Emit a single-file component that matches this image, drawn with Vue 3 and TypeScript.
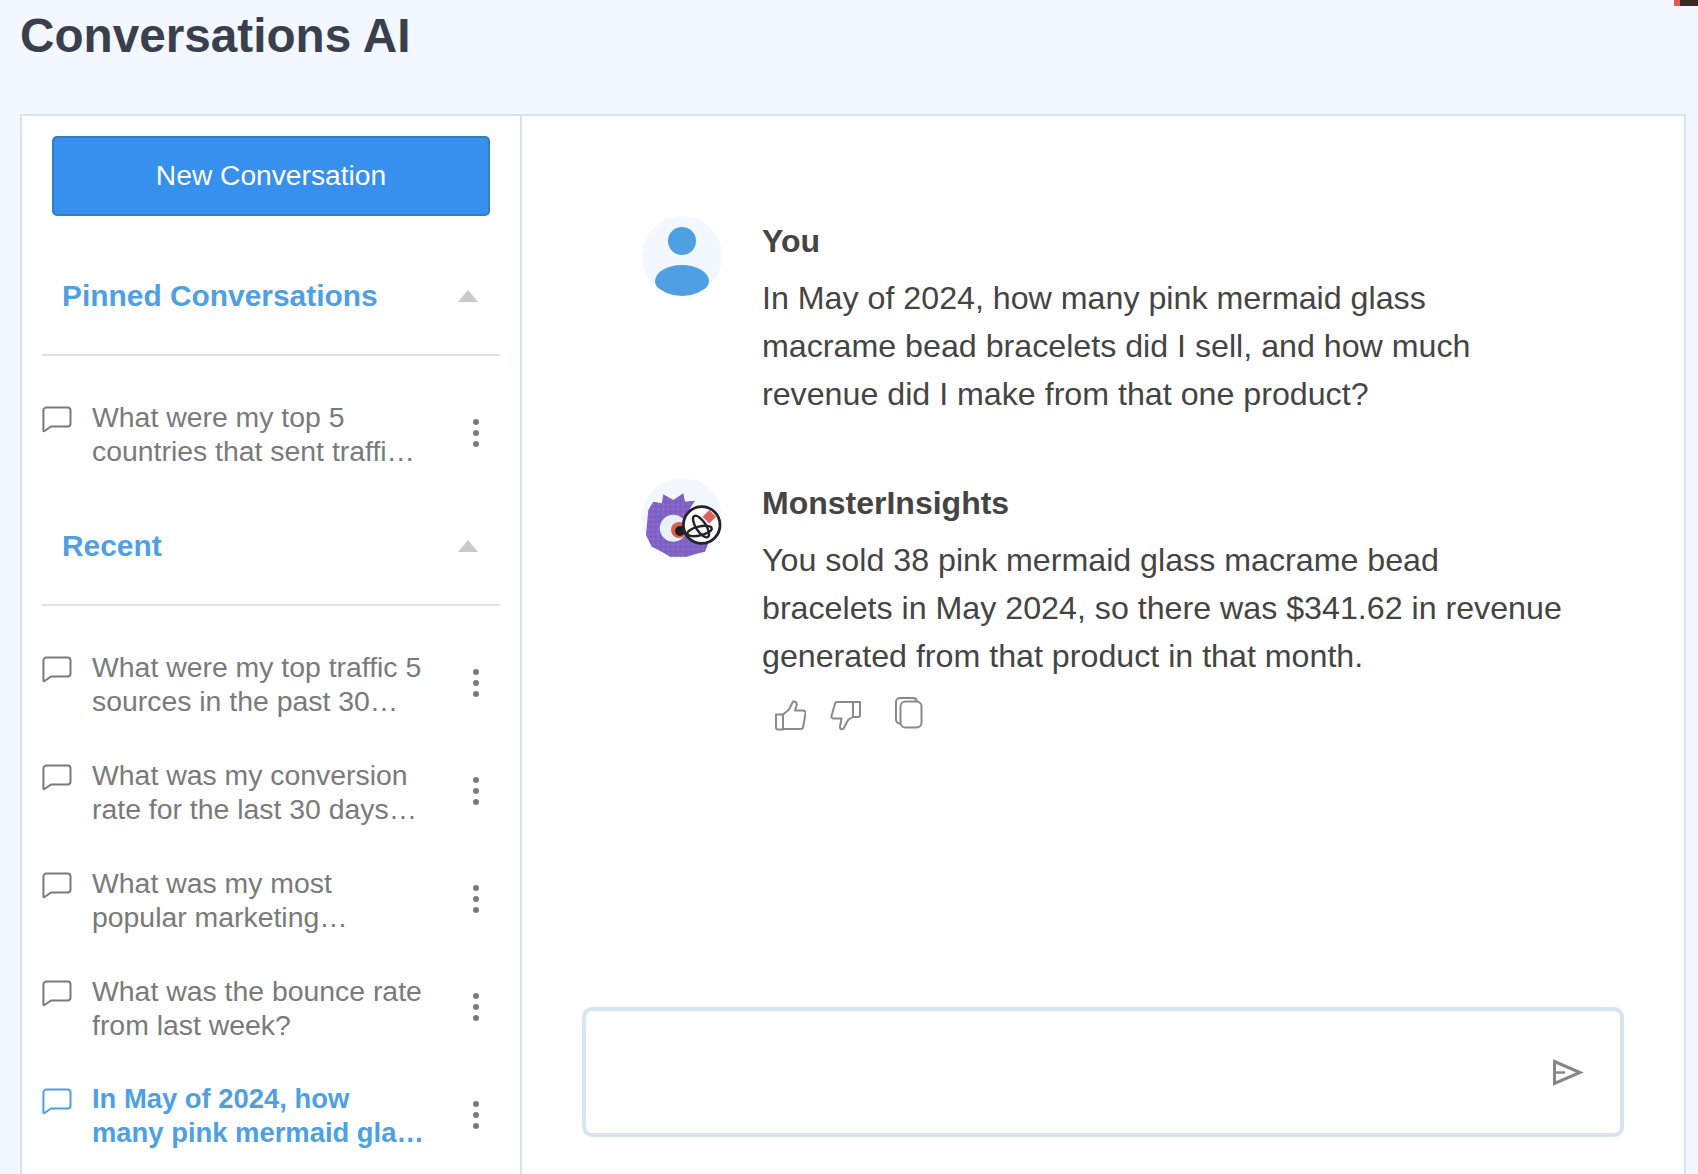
<script setup lang="ts">
interface Conversation {
  id: number
  lines: string[]
  active?: boolean
}

const pinned: Conversation[] = [
  { id: 1, lines: ['What were my top 5', 'countries that sent traffi…'] }
]

const recent: Conversation[] = [
  { id: 2, lines: ['What were my top traffic 5', 'sources in the past 30…'] },
  { id: 3, lines: ['What was my conversion', 'rate for the last 30 days…'] },
  { id: 4, lines: ['What was my most', 'popular marketing…'] },
  { id: 5, lines: ['What was the bounce rate', 'from last week?'] },
  { id: 6, lines: ['In May of 2024, how', 'many pink mermaid gla…'], active: true }
]

const sections = [
  { title: 'Pinned Conversations', items: pinned },
  { title: 'Recent', items: recent }
]
</script>

<template>
  <div class="page">
    <div class="corner"></div>
    <h1 class="title">Conversations AI</h1>
    <div class="panel">
      <aside class="sidebar">
        <button class="new-btn">New Conversation</button>
        <section v-for="section in sections" :key="section.title" class="section">
          <div class="section-head">
            <span>{{ section.title }}</span>
            <i class="caret"></i>
          </div>
          <ul class="list">
            <li v-for="item in section.items" :key="item.id" class="row" :class="{ active: item.active }">
              <svg class="bubble" viewBox="0 0 30 28" fill="none" stroke="currentColor" stroke-width="2" stroke-linejoin="round">
                <path d="M4.500 1.500h21a3 3 0 0 1 3 3v13a3 3 0 0 1-3 3H9l-6.500 4.500a.7.7 0 0 1-1.100-.6V4.500a3 3 0 0 1 3-3z" />
              </svg>
              <div class="row-text">
                <span v-for="line in item.lines" :key="line">{{ line }}</span>
              </div>
              <div class="kebab"><b></b><b></b><b></b></div>
            </li>
          </ul>
        </section>
      </aside>

      <main class="chat">
        <div class="messages">
          <div class="message">
            <svg class="avatar" viewBox="0 0 80 80">
              <defs>
                <clipPath id="userClip"><circle cx="40" cy="40" r="40" /></clipPath>
              </defs>
              <circle cx="40" cy="40" r="40" fill="#f3f7ff" />
              <circle cx="40" cy="25" r="14" fill="#4f9fe3" />
              <ellipse cx="40" cy="65" rx="27" ry="16" fill="#4f9fe3" clip-path="url(#userClip)" />
            </svg>
            <div class="bubble-text">
              <div class="name">You</div>
              <p>In May of 2024, how many pink mermaid glass<br />macrame bead bracelets did I sell, and how much<br />revenue did I make from that one product?</p>
            </div>
          </div>

          <div class="message">
            <svg class="avatar" viewBox="0 0 80 80">
              <defs>
                <pattern id="speckle" width="5" height="5" patternUnits="userSpaceOnUse">
                  <circle cx="1.200" cy="1.200" r=".5" fill="#a48fdc" />
                  <circle cx="3.700" cy="3.700" r=".5" fill="#6547b0" />
                </pattern>
              </defs>
              <circle cx="40" cy="40" r="40" fill="#f3f7ff" />
              <path d="M6.300 32l5-8.300 8.400 1.600 1.600-9 10 5.700 10-6.700 1.700 8.400 10-1-5 7.600 10 18.400 8.300 16.600-3.300 8.400-6.700 1.600-11.600 3.400H28l-8.300-5-10-5L4 57z" fill="#8062c6" />
              <path d="M6.300 32l5-8.300 8.400 1.600 1.600-9 10 5.700 10-6.700 1.700 8.400 10-1-5 7.600 10 18.400 8.300 16.600-3.300 8.400-6.700 1.600-11.600 3.400H28l-8.300-5-10-5L4 57z" fill="url(#speckle)" />
              <circle cx="31.300" cy="50.300" r="13.500" fill="#e8f0fa" />
              <circle cx="37" cy="52" r="8" fill="#d9614f" />
              <circle cx="38" cy="53" r="5" fill="#1f1d24" />
              <circle cx="59.700" cy="47" r="18.300" fill="#fff" stroke="#25232a" stroke-width="2.800" />
              <path d="M67.300 32l6.700 6.700-6.700 6.700-6.700-6.700z" fill="#e2605c" />
              <g fill="none" stroke="#25232a" stroke-width="2.400">
                <ellipse cx="59" cy="48.500" rx="5" ry="12.500" transform="rotate(-33 59 48.500)" />
                <ellipse cx="57.500" cy="53" rx="12.500" ry="4.500" transform="rotate(-13 57.500 53)" />
              </g>
            </svg>
            <div class="bubble-text">
              <div class="name">MonsterInsights</div>
              <p>You sold 38 pink mermaid glass macrame bead<br />bracelets in May 2024, so there was $341.62 in revenue<br />generated from that product in that month.</p>
              <div class="feedback">
                <svg width="32" height="32" viewBox="0 0 32 32" fill="none" stroke="#8a8a8a" stroke-width="2" stroke-linejoin="round">
                  <path d="M2 15.500h7v15H4a2 2 0 0 1-2-2z" />
                  <path d="M9 15.500l6-5 4-8c3-.5 4 1.500 3.500 4l-1.500 5h8a2.500 2.500 0 0 1 2.500 3l-2.500 14a2 2 0 0 1-2 1.500H9" />
                </svg>
                <svg width="32" height="32" viewBox="0 0 32 32" fill="none" stroke="#8a8a8a" stroke-width="2" stroke-linejoin="round">
                  <path d="M30 3h-7v15h5a2 2 0 0 0 2-2z" />
                  <path d="M23 3H7a2 2 0 0 0-2 1.500L1.500 17a2 2 0 0 0 2 2.500h8l-1.500 8c-.3 2.500 2.500 3.500 3.500 2l5-9 4.500-2.500" />
                </svg>
                <svg class="copy" width="30" height="34" viewBox="0 0 30 34" fill="none" stroke="#8a8a8a" stroke-width="2">
                  <path d="M6.500 27.500A4 4 0 0 1 2 24V6a4 4 0 0 1 4-4h13a4 4 0 0 1 4 3.500" />
                  <rect x="6.500" y="5.500" width="21" height="26" rx="5" />
                </svg>
              </div>
            </div>
          </div>
        </div>

        <div class="composer">
          <svg width="31" height="27" viewBox="0 0 31 27" fill="none" stroke="#868686" stroke-width="3">
            <path d="M1.500 2.500L27 13.500 1.500 24.500z" />
            <path d="M1.500 13.500H12" stroke-width="2.400" />
          </svg>
        </div>
      </main>
    </div>
  </div>
</template>

<style>
html,
body {
  margin: 0;
  background: #f3f7ff;
}
</style>

<style scoped>
.page {
  height: 1174px;
  overflow: hidden;
  background: #f3f7ff;
  font-family: "Liberation Sans", Arial, sans-serif;
  position: relative;
}

.corner {
  position: absolute;
  top: 0;
  right: 0;
  width: 24px;
  height: 6px;
  background: linear-gradient(90deg, #e05a55 0 25%, #3a2b28 25% 100%);
}

.title {
  margin: 0;
  height: 114px;
  padding: 6px 0 0 20px;
  box-sizing: border-box;
  font-size: 47.700px;
  line-height: 60px;
  font-weight: 700;
  color: #393f4c;
}

.panel {
  display: flex;
  margin: 0 12px 0 20px;
  height: 1070px;
  background: #fff;
  border: 2px solid #d6e4f0;
  border-bottom: 0;
}

.sidebar {
  width: 500px;
  flex: none;
  box-sizing: border-box;
  border-right: 2px solid #d6e4f0;
  padding: 20px 20px 0;
}

.new-btn {
  display: block;
  width: 438px;
  height: 80px;
  margin: 0 0 2px 10px;
  padding-bottom: 3px;
  background: #3790ee;
  border: 2px solid #2f7fc0;
  border-radius: 5px;
  color: #fff;
  font: 400 28.200px "Liberation Sans", Arial, sans-serif;
}

.section-head {
  display: flex;
  align-items: center;
  justify-content: space-between;
  height: 138px;
  box-sizing: border-box;
  padding: 19px 22px 0 20px;
  border-bottom: 2px solid #d6e4f0;
  font-size: 29.900px;
  font-weight: 700;
  color: #4f9fe3;
}

.caret {
  width: 0;
  height: 0;
  border: 10px solid transparent;
  border-top: 0;
  border-bottom: 12px solid #c9c9c9;
}

.list {
  list-style: none;
  margin: 0;
  padding: 37px 0 0;
}

.row {
  display: flex;
  align-items: flex-start;
  height: 108px;
  color: #7a7a7a;
}

.section:first-of-type .row {
  height: 75px;
}

.bubble {
  width: 30px;
  height: 28px;
  flex: none;
  margin-top: 13px;
}

.row-text {
  flex: 1;
  margin-left: 20px;
  font-size: 28.400px;
  line-height: 34px;
  padding-top: 7px;
}

.row-text span {
  display: block;
  white-space: nowrap;
}

.row.active {
  color: #4f9fe3;
}

.row.active .row-text {
  font-weight: 700;
  font-size: 27.400px;
}

.kebab {
  display: flex;
  flex-direction: column;
  gap: 5px;
  margin: 26px 21px 0 0;
}

.kebab b {
  width: 6px;
  height: 6px;
  border-radius: 50%;
  background: #7a7a7a;
}

.chat {
  flex: 1;
  display: flex;
  flex-direction: column;
  justify-content: space-between;
  padding: 0 60px;
  color: #444;
}

.messages {
  padding: 100px 0 0 60px;
}

.message {
  display: flex;
  gap: 40px;
  margin-bottom: 60px;
}

.avatar {
  width: 80px;
  height: 80px;
  flex: none;
}

.name {
  font-size: 32px;
  line-height: 50px;
  font-weight: 700;
  color: #444;
}

p {
  margin: 8px 0 0;
  font-size: 32.200px;
  line-height: 48px;
  white-space: nowrap;
}

.feedback {
  display: flex;
  align-items: center;
  gap: 24px;
  margin: 16px 0 0 12px;
}

.copy {
  margin: 0 0 4px 8px;
}

.composer {
  height: 130px;
  box-sizing: border-box;
  margin-bottom: 49px;
  border: 4px solid #d6e4f0;
  border-radius: 10px;
  display: flex;
  align-items: center;
  justify-content: flex-end;
  padding-right: 36px;
}
</style>
